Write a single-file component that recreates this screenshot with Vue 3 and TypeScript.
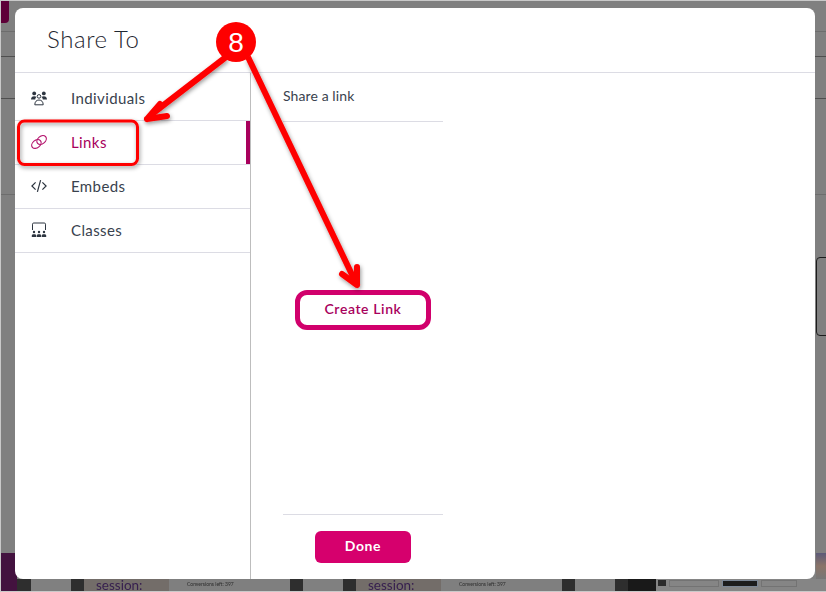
<script setup lang="ts">
type NavItem = { id: string; label: string };

const navItems: NavItem[] = [
  { id: 'individuals', label: 'Individuals' },
  { id: 'links', label: 'Links' },
  { id: 'embeds', label: 'Embeds' },
  { id: 'classes', label: 'Classes' },
];

const activeId = 'links';

// dimmed page strip that shows under the modal
const stripSegments = [
  { w: 16, c: '#43123f' }, { w: 14, c: '#2e2e2e' }, { w: 40, c: '#808080' }, { w: 13, c: '#2e2e2e' },
  { w: 85, c: '#736d69', t: 'session:' }, { w: 121, c: '#7f7f7f', s: 'Conversions left: 397' },
  { w: 13, c: '#2e2e2e' }, { w: 40, c: '#808080' }, { w: 13, c: '#2e2e2e' },
  { w: 85, c: '#736d69', t: 'session:' }, { w: 121, c: '#7f7f7f', s: 'Conversions left: 397' },
  { w: 13, c: '#2e2e2e' }, { w: 40, c: '#808080' }, { w: 13, c: '#2e2e2e' }, { w: 28, c: '#191919' },
  { w: 170, c: '#858585', tools: true },
];
</script>

<template>
  <div class="page">
    <div class="backdrop">
      <div class="tab"></div>
      <div class="rule r1"></div>
      <div class="rule r2"></div>
      <div class="rule r3"></div>
      <div class="rule r4"></div>
      <div class="side-box"></div>
      <div class="purple"></div>
      <div class="avatar"></div>
      <div class="strip">
        <div
          v-for="(seg, i) in stripSegments"
          :key="i"
          class="seg"
          :style="{ width: seg.w + 'px', background: seg.c }"
        >
          <span v-if="seg.t" class="seg-big">{{ seg.t }}</span>
          <span v-if="seg.s" class="seg-small">{{ seg.s }}</span>
          <div v-if="seg.tools" class="tools">
            <i class="tool-chip"></i>
            <i class="tool-field wide"></i>
            <i class="tool-field dark"></i>
            <i class="tool-field"></i>
          </div>
        </div>
      </div>
    </div>

    <div class="modal">
      <header class="modal-head">Share To</header>
      <div class="modal-body">
        <nav class="sidebar">
          <div
            v-for="item in navItems"
            :key="item.id"
            class="nav-row"
            :class="{ active: item.id === activeId }"
          >
            <svg class="nav-icon" viewBox="0 0 16 16" width="16" height="16" fill="none" stroke="currentColor">
              <g v-if="item.id === 'individuals'" fill="currentColor" stroke="none">
                <circle cx="3.2" cy="3.400" r="1.900" />
                <circle cx="12.800" cy="3.400" r="1.900" />
                <path d="M0 9.600c0-2.200 1.300-3.400 3.200-3.400 1 0 1.800.3 2.300.9-.8.6-1.200 1.400-1.300 2.500z" />
                <path d="M16 9.600c0-2.200-1.300-3.400-3.200-3.400-1 0-1.800.3-2.300.9.800.6 1.200 1.400 1.300 2.500z" />
                <circle cx="8" cy="6.400" r="1.800" fill="none" stroke="currentColor" stroke-width="1" />
                <path d="M3.800 14.800c0-3 1.600-4.800 4.200-4.800s4.200 1.800 4.200 4.800z" fill="none" stroke="currentColor" stroke-width="1" />
              </g>
              <g v-else-if="item.id === 'links'" stroke-width="1.200">
                <ellipse cx="5.400" cy="10" rx="5.200" ry="3.800" transform="rotate(-40 5.400 10)" />
                <ellipse cx="10.600" cy="6" rx="5.200" ry="3.800" transform="rotate(-40 10.600 6)" />
              </g>
              <g v-else-if="item.id === 'embeds'" stroke-width="1.200">
                <path d="M4.600 4.300 .9 8l3.700 3.700" />
                <path d="M11.400 4.300 15.100 8l-3.700 3.700" />
                <path d="M9.600 2.200 6.400 13.800" />
              </g>
              <g v-else>
                <path d="M1.500 8V2.200c0-.8.500-1.200 1.200-1.200h10.600c.7 0 1.200.4 1.200 1.200V8" stroke-width="1" />
                <g fill="currentColor" stroke="none">
                  <circle cx="3" cy="10" r="1.200" />
                  <circle cx="8" cy="10" r="1.200" />
                  <circle cx="13" cy="10" r="1.200" />
                  <path d="M.8 15v-1.300c0-.9.800-1.400 2.200-1.400s2.200.5 2.200 1.400V15z" />
                  <path d="M5.800 15v-1.300c0-.9.800-1.400 2.200-1.400s2.200.5 2.200 1.400V15z" />
                  <path d="M10.800 15v-1.300c0-.9.800-1.400 2.200-1.400s2.200.5 2.200 1.400V15z" />
                </g>
              </g>
            </svg>
            <span class="nav-label">{{ item.label }}</span>
          </div>
        </nav>

        <section class="panel">
          <div class="panel-head">Share a link</div>
          <div class="panel-main">
            <button class="create-btn" type="button">Create Link</button>
          </div>
          <div class="panel-foot">
            <button class="done-btn" type="button">Done</button>
          </div>
        </section>
      </div>
    </div>

    <!-- tutorial annotations drawn on top of the screenshot -->
    <svg class="notes" viewBox="0 0 826 592" width="826" height="592">
      <defs>
        <filter id="soft" x="-20%" y="-20%" width="140%" height="140%">
          <feDropShadow dx="1" dy="2" stdDeviation="2" flood-color="#000" flood-opacity="0.4" />
        </filter>
      </defs>
      <g filter="url(#soft)" fill="none" stroke="#fe0000">
        <rect x="18.500" y="121" width="119" height="43.500" rx="6" stroke-width="3" />
        <path d="M226 57 152 114" stroke-width="6" />
        <path d="M248 57 355 281" stroke-width="6" />
        <path d="M147 119 167 116 M147 119 160 104" stroke-width="6" stroke-linecap="round" />
        <path d="M357 285 342 274 M357 285 357 267" stroke-width="6" stroke-linecap="round" />
      </g>
      <circle cx="236" cy="42" r="20" fill="#fe0000" />
      <text x="236" y="52" class="step" text-anchor="middle">8</text>
    </svg>
  </div>
</template>

<style scoped>
.page {
  position: relative;
  box-sizing: border-box;
  width: 826px;
  height: 592px;
  padding: 8px 11px 13px 15px;
  display: flex;
  overflow: hidden;
  background: #808080;
  font-family: Lato, "Liberation Sans", sans-serif;
}

.backdrop {
  position: absolute;
  inset: 0;
  border-top: 1px solid #c9c9c9;
  border-left: 1px solid #c9c9c9;
  border-bottom: 1px solid #c9c9c9;
}

.tab {
  position: absolute;
  left: 0;
  top: 0;
  width: 8px;
  height: 22px;
  background: #5e0038;
  border-bottom-right-radius: 4px;
}

.rule {
  position: absolute;
  left: 0;
  right: 0;
  height: 1px;
}
.r1 { top: 30px; background: #6d6d6d; }
.r2 { top: 55px; background: #4f4f4f; }
.r3 { top: 97px; background: #4f4f4f; }
.r4 { top: 193px; background: #6d6d6d; }

.side-box {
  position: absolute;
  left: 815px;
  top: 256px;
  width: 20px;
  height: 79px;
  box-sizing: border-box;
  border: 1px solid #1c1c1c;
  border-radius: 4px;
}

.purple {
  position: absolute;
  left: 0;
  top: 552px;
  width: 16px;
  height: 30px;
  background: #43123f;
}

.avatar {
  position: absolute;
  left: 815px;
  top: 552px;
  width: 11px;
  height: 26px;
  background: linear-gradient(#5c5a78, #8a7468 50%, #777);
}

.strip {
  position: absolute;
  left: 0;
  right: 0;
  top: 578px;
  height: 12px;
  display: flex;
}

.seg {
  flex: none;
  white-space: nowrap;
}

.seg-big {
  display: block;
  margin-left: 12px;
  font-size: 13.500px;
  line-height: 12px;
  color: #37204f;
  filter: blur(0.4px);
}

.seg-small {
  display: block;
  margin: 2px 0 0 18px;
  font-size: 5px;
  line-height: 7px;
  color: #2c2c2c;
  filter: blur(0.3px);
}

.tools {
  display: flex;
  gap: 3px;
  padding: 1px 0 0 2px;
  filter: blur(0.5px);
}

.tool-chip {
  width: 8px;
  height: 6px;
  background: #2b2b2b;
}

.tool-field {
  width: 34px;
  height: 5px;
  background: #858585;
  border: 1px solid #737373;
}

.tool-field.wide {
  width: 48px;
}

.tool-field.dark {
  background: #1d1d1d;
  border-color: #7c8796;
}

.modal {
  position: relative;
  flex: 1;
  display: flex;
  flex-direction: column;
  background: #fff;
  border-radius: 8px;
  overflow: hidden;
}

.modal-head {
  flex: none;
  box-sizing: border-box;
  height: 65px;
  padding: 15px 32px 0;
  border-bottom: 1px solid #dcdce4;
  font-size: 24px;
  font-weight: 300;
  line-height: 32px;
  letter-spacing: 0.6px;
  color: #1f2731;
}

.modal-body {
  flex: 1;
  display: flex;
  min-height: 0;
}

.sidebar {
  flex: none;
  width: 235px;
  margin-right: 1px;
  box-shadow: 1px 0 0 #bdbdbd;
}

.nav-row {
  position: relative;
  box-sizing: border-box;
  height: 44px;
  display: flex;
  align-items: center;
  gap: 24px;
  padding: 0 0 2px 16px;
  border-bottom: 1px solid #dcdce4;
  font-size: 15px;
  letter-spacing: 0.4px;
  color: #39424e;
}

.nav-row:first-child {
  height: 48px;
  padding-top: 3px;
  padding-bottom: 1px;
}

.nav-row.active {
  color: #a8005c;
}

.nav-row.active::after {
  content: "";
  position: absolute;
  right: 0;
  top: 0;
  bottom: 0;
  width: 4px;
  background: #a8005c;
}

.nav-icon {
  flex: none;
  color: #2d3540;
}

.active .nav-icon {
  color: #b5176f;
}

.panel {
  flex: none;
  width: 160px;
  margin-left: 32px;
  display: flex;
  flex-direction: column;
}

.panel-head {
  flex: none;
  box-sizing: border-box;
  height: 49px;
  padding-top: 13px;
  border-bottom: 1px solid #dcdce4;
  font-size: 14px;
  line-height: 20px;
  letter-spacing: 0.1px;
  color: #39424e;
}

.panel-main {
  flex: 1;
  display: flex;
  align-items: center;
  justify-content: center;
  padding-bottom: 17px;
}

.create-btn {
  box-sizing: border-box;
  width: 136px;
  height: 40px;
  padding: 0 0 2px;
  background: #fff;
  border: 5px solid #d1006c;
  border-radius: 12px;
  font-family: inherit;
  font-size: 14px;
  font-weight: 600;
  letter-spacing: 0.6px;
  color: #a8005c;
}

.panel-foot {
  flex: none;
  display: flex;
  justify-content: center;
  padding: 16px 0;
  border-top: 1px solid #dcdce4;
}

.done-btn {
  width: 96px;
  height: 32px;
  padding: 0 0 3px;
  background: #d6006d;
  border: 0;
  border-radius: 6px;
  font-family: inherit;
  font-size: 14px;
  font-weight: 700;
  letter-spacing: 0.6px;
  color: #fff;
}

.notes {
  position: absolute;
  left: 0;
  top: 0;
  pointer-events: none;
}

.step {
  font-family: "Liberation Sans", sans-serif;
  font-size: 28px;
  fill: #fff;
}
</style>

<style>
html,
body {
  margin: 0;
  background: #808080;
}
</style>
